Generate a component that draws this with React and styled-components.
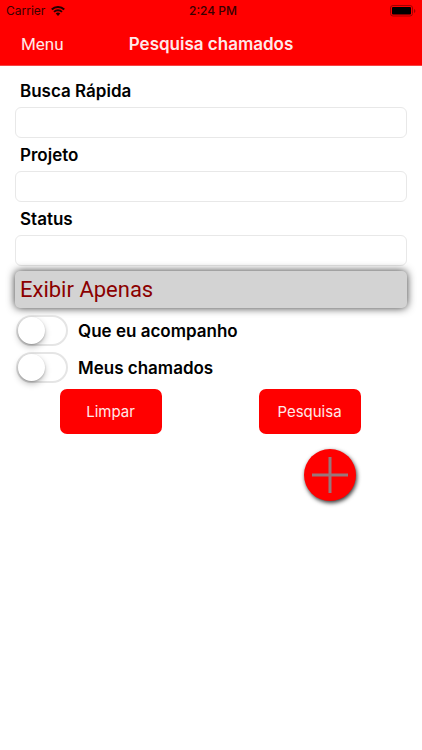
import React, { useState } from "react"
import styled, { createGlobalStyle, ThemeProvider } from "styled-components"

const theme = {
  themeColor: "#ff0000",
  titleColor: "#8b0000",
  panelColor: "#d3d3d3",
  borderColor: "#e8e8e8",
}

const GlobalStyles = createGlobalStyle`
  * {
    box-sizing: border-box;
  }
  body {
    margin: 0;
    background: #fff;
    color: #000;
    font-family: Inter, "Liberation Sans", sans-serif;
  }
  button, input {
    font-family: inherit;
  }
`

const Header = styled.header`
  background: ${props => props.theme.themeColor};
  border-bottom: 1px solid #f54444;
`

const StatusBar = styled.div`
  display: grid;
  grid-template-columns: 1fr auto 1fr;
  align-items: center;
  height: 22px;
  padding: 0 6px;
  color: #380000;
  font-size: 12px;
  line-height: 22px;
`

const Carrier = styled.div`
  display: flex;
  align-items: center;
  gap: 6px;
`

const Clock = styled.time`
  padding-left: 4px;
  font-weight: 500;
`

const Battery = styled.svg`
  justify-self: end;
`

const NavBar = styled.nav`
  display: grid;
  grid-template-columns: 1fr auto 1fr;
  align-items: center;
  height: 43px;
  padding: 0 21px;
`

const MenuLink = styled.a`
  color: #ffe9e9;
  font-family: Roboto, sans-serif;
  font-size: 17px;
  text-decoration: none;
`

const Title = styled.h1`
  margin: 0;
  color: #ffe9e9;
  font-size: 17px;
  font-weight: 600;
`

const Form = styled.form`
  display: flex;
  flex-direction: column;
  padding: 8px 15px;
`

const Label = styled.label`
  padding: 2px 0 0 5px;
  font-size: 17px;
  font-weight: 600;
  line-height: 31px;
`

const TextInput = styled.input`
  width: 100%;
  height: 31px;
  padding: 0 8px;
  background: #fff;
  border: 1px solid ${props => props.theme.borderColor};
  border-radius: 6px;
  font-size: 16px;
`

const SectionTitle = styled.h2`
  margin: 5px 0 7px;
  padding-left: 5px;
  background: ${props => props.theme.panelColor};
  border-radius: 5px;
  box-shadow: 0 0 8px rgba(0, 0, 0, 0.8);
  color: ${props => props.theme.titleColor};
  font-family: Roboto, sans-serif;
  font-size: 22px;
  font-weight: 400;
  line-height: 37px;
`

const SwitchRow = styled.div`
  display: flex;
  align-items: center;
  height: 31px;
  margin-bottom: 6px;
`

const SwitchLabel = styled.label`
  padding-left: 10px;
  font-size: 17px;
  font-weight: 600;
`

const Switch = styled.input.attrs({ type: "checkbox", role: "switch" })`
  appearance: none;
  display: flex;
  align-items: center;
  width: 52px;
  height: 31px;
  margin: 0 0 0 1px;
  background: ${props => (props.checked ? "#4cd964" : "#fff")};
  border: 2px solid ${props => (props.checked ? "#4cd964" : "#e5e5e5")};
  border-radius: 16px;
  &::before {
    content: "";
    width: 27px;
    height: 27px;
    margin-left: ${props => (props.checked ? "21px" : "0")};
    background: #fff;
    border-radius: 50%;
    box-shadow: 0 3px 6px rgba(0, 0, 0, 0.25), 0 1px 2px rgba(0, 0, 0, 0.2);
  }
`

const Buttons = styled.div`
  display: grid;
  grid-template-columns: 1fr 1fr;
  justify-items: center;
  margin: 0 -2px 0 -4px;
`

const Button = styled.button`
  width: 102px;
  height: 45px;
  padding: 0;
  background: ${props => props.theme.themeColor};
  border: 0;
  border-radius: 7px;
  color: #ffe9e9;
  font-size: 15px;
`

const AddButton = styled.button`
  display: flex;
  align-items: center;
  justify-content: center;
  align-self: flex-end;
  width: 52px;
  height: 52px;
  margin: 15px 51px 0 0;
  padding: 0;
  background: ${props => props.theme.themeColor};
  border: 0;
  border-radius: 50%;
  box-shadow: 1px 2px 4px rgba(0, 0, 0, 0.8);
`

const fields = [
  { id: "busca", label: "Busca Rápida" },
  { id: "projeto", label: "Projeto" },
  { id: "status", label: "Status" },
]

const switches = [
  { id: "acompanho", label: "Que eu acompanho" },
  { id: "meus", label: "Meus chamados" },
]

const WifiIcon = () => (
  <svg width="14" height="10" viewBox="0 0 14 10" fill="none" stroke="#240000" aria-hidden="true">
    <path d="M0.8 3.6a8.8 8.8 0 0 1 12.4 0" strokeWidth="2.1" />
    <path d="M3 5.9a5.7 5.7 0 0 1 8 0" strokeWidth="1.9" />
    <path d="M7 9.9 4.7 7.6a3.2 3.2 0 0 1 4.6 0z" fill="#240000" stroke="none" />
  </svg>
)

const BatteryIcon = () => (
  <Battery width="26" height="12" viewBox="0 0 26 12" aria-hidden="true">
    <rect x="0.5" y="0.5" width="22" height="10.5" rx="2.5" fill="none" stroke="#a00000" />
    <rect x="2" y="2" width="19" height="7.5" rx="1" fill="#000" />
    <path d="M24 4v4q1.4-.5 1.4-2T24 4z" fill="#a00000" />
  </Battery>
)

const App = () => {
  const [values, setValues] = useState({})
  const [checked, setChecked] = useState({})

  const clear = () => {
    setValues({})
    setChecked({})
  }

  return (
    <ThemeProvider theme={theme}>
      <GlobalStyles />
      <Header>
        <StatusBar>
          <Carrier>
            Carrier
            <WifiIcon />
          </Carrier>
          <Clock>2:24 PM</Clock>
          <BatteryIcon />
        </StatusBar>
        <NavBar>
          <MenuLink href="#menu">Menu</MenuLink>
          <Title>Pesquisa chamados</Title>
        </NavBar>
      </Header>
      <Form onSubmit={e => e.preventDefault()}>
        {fields.map(field => (
          <React.Fragment key={field.id}>
            <Label htmlFor={field.id}>{field.label}</Label>
            <TextInput
              id={field.id}
              type="text"
              value={values[field.id] || ""}
              onChange={e => setValues({ ...values, [field.id]: e.target.value })}
            />
          </React.Fragment>
        ))}
        <SectionTitle>Exibir Apenas</SectionTitle>
        {switches.map(item => (
          <SwitchRow key={item.id}>
            <Switch
              id={item.id}
              checked={!!checked[item.id]}
              onChange={e => setChecked({ ...checked, [item.id]: e.target.checked })}
            />
            <SwitchLabel htmlFor={item.id}>{item.label}</SwitchLabel>
          </SwitchRow>
        ))}
        <Buttons>
          <Button type="button" onClick={clear}>Limpar</Button>
          <Button type="submit">Pesquisa</Button>
        </Buttons>
        <AddButton type="button" aria-label="Adicionar">
          <svg width="36" height="36" viewBox="0 0 36 36" stroke="#98777a" strokeWidth="3" aria-hidden="true">
            <path d="M18 0v36M0 18h36" />
          </svg>
        </AddButton>
      </Form>
    </ThemeProvider>
  )
}

export default App
